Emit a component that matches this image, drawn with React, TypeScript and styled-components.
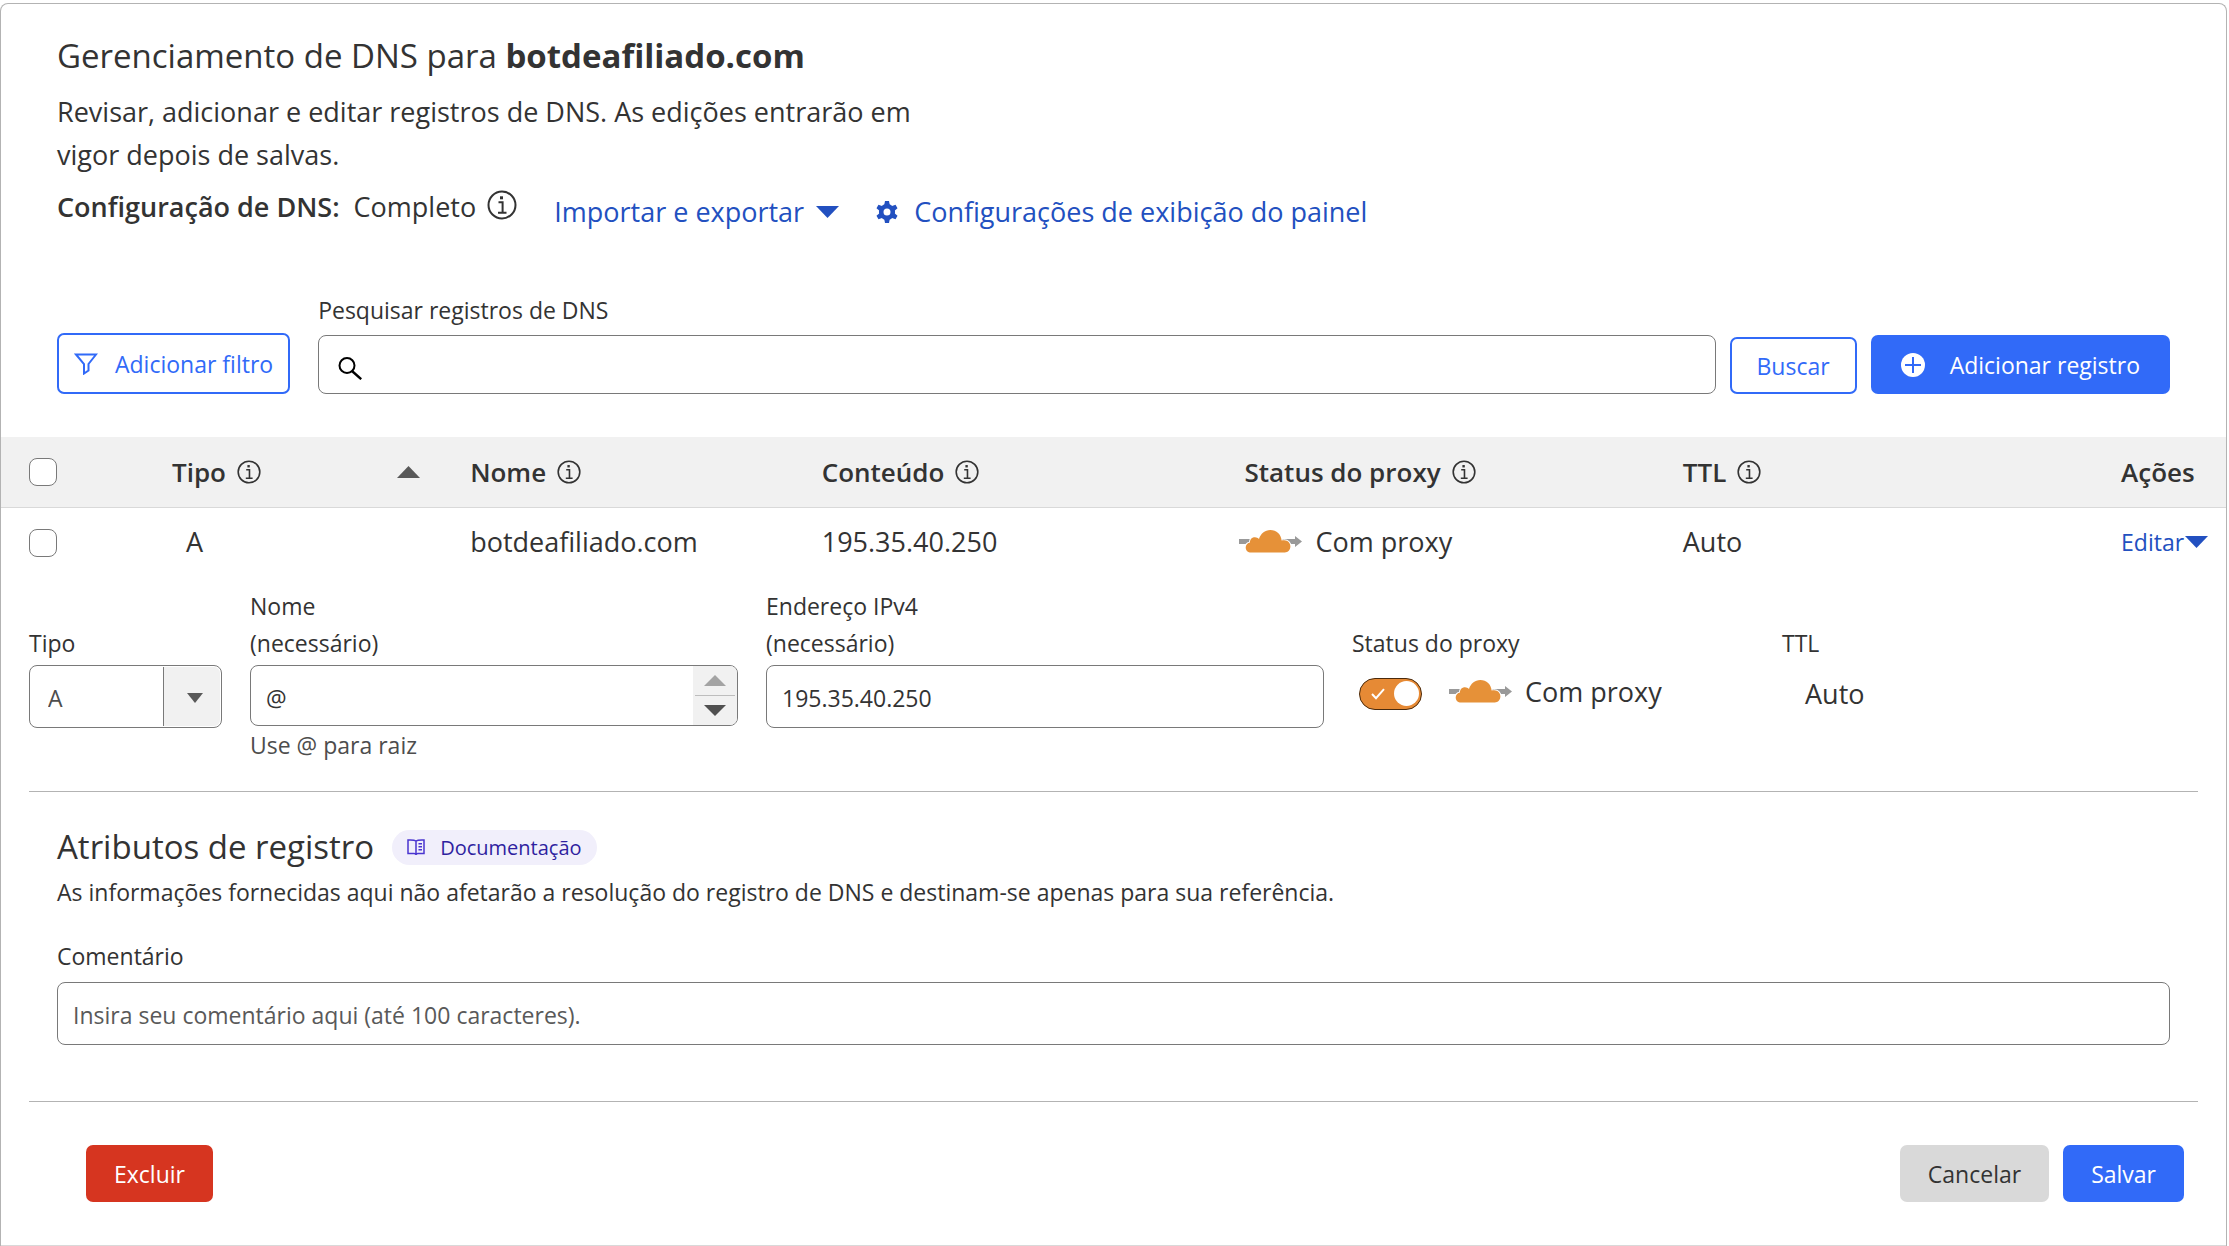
import React from "react";
import styled, { createGlobalStyle, css } from "styled-components";

const color = {
  text: "#333333",
  muted: "#4d4d4d",
  link: "#2250c0",
  blue: "#316af8",
  red: "#d63520",
  line: "#b3b3b3",
  softLine: "#d9d9d9",
  field: "#797979",
  surface: "#f1f1f1",
  orange: "#e68a35",
};

const Global = createGlobalStyle`
  *, *::before, *::after { box-sizing: border-box; }
  body {
    margin: 0;
    background: #fff;
    color: ${color.text};
    font-family: "Open Sans", "Noto Sans", sans-serif;
    font-size: 27px;
    line-height: 43px;
  }
  button, input, select, textarea { font: inherit; color: inherit; margin: 0; }
  svg { display: block; flex: none; }
`;

const Card = styled.main`
  min-height: calc(100vh - 3px);
  margin: 3px 2px 0 0;
  border: 1px solid ${color.line};
  border-bottom: 0;
  border-radius: 8px 8px 0 0;
`;

const Header = styled.header`
  padding: 30px 56px 0;
`;

const Title = styled.h1`
  margin: 0;
  font-size: 33px;
  line-height: 44px;
  font-weight: 400;
`;

const Intro = styled.p`
  max-width: 900px;
  margin: 12px 0 9px;
`;

const SetupRow = styled.div`
  display: flex;
  align-items: flex-start;
  gap: 37px;
`;

const Setup = styled.div`
  display: flex;
  gap: 14px;
`;

const SetupValue = styled.span`
  display: flex;
  gap: 11px;

  svg { margin-top: 5px; }
`;

const Strong = styled.span`
  font-weight: 600;
`;

const Links = styled.div`
  display: flex;
  gap: 37px;
  padding-top: 5px;
`;

const LinkButton = styled.button<{ $gap: number }>`
  display: inline-flex;
  align-items: center;
  gap: ${(p) => p.$gap}px;
  padding: 0;
  border: 0;
  background: none;
  color: ${color.link};
  cursor: pointer;
`;

const Toolbar = styled.div`
  display: flex;
  align-items: flex-end;
  gap: 28px;
  padding: 60px 56px 43px;
`;

const SearchForm = styled.form`
  display: flex;
  flex: 1;
  align-items: flex-end;
  gap: 14px;
`;

const SearchField = styled.div`
  flex: 1;
`;

const Label = styled.label`
  display: block;
  font-size: 23px;
  line-height: 34px;
`;

const SearchBox = styled.div`
  display: flex;
  align-items: center;
  gap: 12px;
  height: 59px;
  margin-top: 8px;
  padding: 8px 19px 0;
  border: 1px solid ${color.field};
  border-radius: 8px;

  input {
    flex: 1;
    height: 40px;
    border: 0;
    outline: 0;
    background: none;
    font-size: 23px;
  }
`;

type Tone = "outline" | "primary" | "danger" | "neutral";

const tones: Record<Tone, ReturnType<typeof css>> = {
  outline: css`border: 2px solid ${color.blue}; background: #fff; color: ${color.blue};`,
  primary: css`border: 0; background: ${color.blue}; color: #fff;`,
  danger: css`border: 0; background: ${color.red}; color: #fff;`,
  neutral: css`border: 0; background: #d9d9d9; color: ${color.text};`,
};

const Button = styled.button<{ $tone: Tone; $height?: number; $pad?: number; $gap?: number }>`
  display: inline-flex;
  align-items: center;
  justify-content: center;
  gap: ${(p) => p.$gap ?? 0}px;
  height: ${(p) => p.$height ?? 57}px;
  padding: 0 ${(p) => p.$pad ?? 28}px;
  border-radius: 7px;
  font-size: 23px;
  line-height: 34px;
  white-space: nowrap;
  cursor: pointer;
  ${(p) => tones[p.$tone]}
`;

const Table = styled.table`
  width: 100%;
  table-layout: fixed;
  border-collapse: separate;
  border-spacing: 0;
`;

const Col = styled.col<{ $width?: string }>`
  width: ${(p) => p.$width ?? "auto"};
`;

const HeadCell = styled.th`
  height: 71px;
  padding: 0 14px;
  border-bottom: 1px solid ${color.softLine};
  background: ${color.surface};
  font-size: 26px;
  font-weight: 600;
  text-align: left;
  white-space: nowrap;
`;

const CheckCell = styled.td`
  padding: 0 14px;
`;

const Cell = styled.td<{ $left?: number }>`
  height: 69px;
  padding: 0 0 3px ${(p) => p.$left ?? 14}px;
  white-space: nowrap;
`;

const HeadContent = styled.span`
  display: flex;
  align-items: center;
  gap: 11px;
`;

const SortMark = styled.span`
  margin-left: auto;
  padding-right: 22px;
`;

const Checkbox = styled.input`
  display: block;
  width: 28px;
  height: 28px;
  margin: 0 0 0 14px;
  appearance: none;
  border: 1px solid ${color.field};
  border-radius: 8px;
  background: #fff;

  &:checked { background: ${color.blue}; }
`;

const Proxy = styled.span`
  display: flex;
  align-items: center;
  gap: 13px;
`;

const EditButton = styled(LinkButton)`
  font-size: 23px;
`;

const DetailCell = styled.td`
  padding: 11px 28px 43px;
  border-bottom: 1px solid ${color.softLine};
`;

const Fields = styled.div`
  display: grid;
  grid-template-columns: 193px 488fr 558fr 402fr 416fr;
  gap: 28px;
`;

const FieldHead = styled.label`
  display: flex;
  flex-direction: column;
  justify-content: flex-end;
  height: 74px;
  margin-bottom: 3px;
  font-size: 23px;
  line-height: 37px;
`;

const fieldBox = css`
  width: 100%;
  height: 63px;
  border: 1px solid ${color.field};
  border-radius: 8px;
  background: #fff;
  font-size: 23px;
`;

const TextInput = styled.input`
  ${fieldBox}
  display: block;
  padding: 3px 15px 0;

  &::placeholder { color: #595959; opacity: 1; }
`;

const SelectBox = styled.div`
  position: relative;

  select {
    ${fieldBox}
    display: block;
    padding: 3px 70px 0 18px;
    appearance: none;
    color: ${color.muted};
  }
`;

const SelectArrow = styled.span`
  position: absolute;
  inset: 2px 2px 2px auto;
  display: flex;
  align-items: center;
  justify-content: center;
  width: 57px;
  padding: 2px 0 0 5px;
  border-left: 1px solid ${color.field};
  border-radius: 0 6px 6px 0;
  background: ${color.surface};
  pointer-events: none;
`;

const NameBox = styled.div`
  ${fieldBox}
  display: flex;
  height: 61px;
  overflow: hidden;

  input {
    flex: 1;
    min-width: 0;
    padding: 5px 15px 0;
    border: 0;
    background: none;
  }
`;

const Stepper = styled.div`
  display: flex;
  flex-direction: column;
  width: 44px;
  padding: 0 2px;
  background: ${color.surface};

  button {
    display: flex;
    flex: 1;
    align-items: center;
    justify-content: center;
    padding: 0;
    border: 0;
    background: none;
  }
  button + button { border-top: 1px solid #bdbdbd; }
`;

const Help = styled.div`
  margin-top: 2px;
  color: ${color.muted};
  font-size: 23px;
  line-height: 34px;
`;

const Value = styled.div<{ $indent: number }>`
  display: flex;
  align-items: center;
  gap: 27px;
  height: 57px;
  padding-left: ${(p) => p.$indent}px;

  ${Proxy} { padding-bottom: 5px; }
`;

const Toggle = styled.span`
  position: relative;
  display: flex;
  align-items: center;
  width: 63px;
  height: 32px;
  padding-left: 11px;
  border: 1px solid #4a2a0c;
  border-radius: 16px;
  background: ${color.orange};

  input {
    position: absolute;
    inset: 0;
    width: 100%;
    height: 100%;
    opacity: 0;
  }
  &::after {
    content: "";
    width: 25px;
    height: 25px;
    margin: 0 2px 0 auto;
    border-radius: 50%;
    background: #fff;
  }
`;

const Rule = styled.hr`
  height: 1px;
  margin: 0;
  border: 0;
  background: ${color.line};
`;

const Attributes = styled.section`
  margin-top: 29px;

  > div { padding: 33px 28px 56px; }
`;

const AttributesHead = styled.div`
  display: flex;
  align-items: center;
  gap: 18px;
`;

const Subtitle = styled.h2`
  margin: 0;
  font-size: 33px;
  line-height: 44px;
  font-weight: 400;
`;

const DocLink = styled.a`
  display: inline-flex;
  align-items: center;
  gap: 15px;
  height: 35px;
  padding: 0 15px;
  border-radius: 18px;
  background: #f1effb;
  color: #2f1fa0;
  font-size: 20px;
  text-decoration: none;
`;

const Description = styled.p`
  margin: 6px 0 30px;
  font-size: 23px;
  line-height: 34px;
`;

const CommentInput = styled(TextInput)`
  margin-top: 9px;
`;

const Actions = styled.div`
  display: flex;
  gap: 14px;
  padding: 43px 14px 0 57px;

  button:first-child { margin-right: auto; }
`;

function InfoIcon({ size = 24 }: { size?: number }) {
  return (
    <svg width={size} height={size} viewBox="0 0 30 30" fill="none" stroke="#333" strokeWidth="2" aria-hidden="true">
      <circle cx="15" cy="15" r="13.5" />
      <path d="M11.5 12.2H15.6V22.3M11 22.8H19.5" />
      <rect x="13" y="6.3" width="3" height="3" fill="#333" stroke="none" />
    </svg>
  );
}

function GearIcon() {
  return (
    <svg width="22" height="22" viewBox="0 0 22 22" aria-hidden="true">
      <circle cx="11" cy="11" r="5.8" fill="none" stroke="currentColor" strokeWidth="4.6" />
      {[0, 60, 120, 180, 240, 300].map((angle) => (
        <path key={angle} d="M8 5L9 0H13L14 5Z" fill="currentColor" transform={`rotate(${angle} 11 11)`} />
      ))}
    </svg>
  );
}

function Triangle({ width = 23, height = 12, fill, up }: { width?: number; height?: number; fill: string; up?: boolean }) {
  return (
    <svg width={width} height={height} viewBox="0 0 23 12" preserveAspectRatio="none" fill={fill} aria-hidden="true">
      <path d={up ? "M0 12L11.5 0L23 12Z" : "M0 0H23L11.5 12Z"} />
    </svg>
  );
}

function ProxiedCloud() {
  return (
    <svg width="63" height="23" viewBox="0 0 63 23" aria-hidden="true">
      <path d="M0 9H56V6L63 11.5L56 17V14H0Z" fill="#999" />
      <path
        d="M12 22.5C9 22.5 6.7 20.5 6.7 17.5C6.7 15 8.5 13 11 12.6C10.8 9.5 13 7.3 16 7.3C17.5 7.3 19 8 20 9C21.5 3.8 26 0 31.3 0C37.5 0 42.3 4.6 42.6 10.6C43.3 10.3 44.3 10.2 45.2 10.2C48.8 10.2 51.4 13 51.4 16.3C51.4 20 49 22.5 45.8 22.5Z"
        fill="#e69138"
        stroke="#fff"
        strokeWidth="2"
        paintOrder="stroke"
      />
    </svg>
  );
}

const columns = ["Tipo", "Nome", "Conteúdo", "Status do proxy", "TTL"];

function RecordForm() {
  return (
    <>
      <Fields>
        <div>
          <FieldHead htmlFor="type">Tipo</FieldHead>
          <SelectBox>
            <select id="type" defaultValue="A">
              <option>A</option>
            </select>
            <SelectArrow>
              <Triangle width={16} height={10} fill="#595959" />
            </SelectArrow>
          </SelectBox>
        </div>
        <div>
          <FieldHead htmlFor="name">
            <span>Nome</span>
            <span>(necessário)</span>
          </FieldHead>
          <NameBox>
            <input id="name" type="text" defaultValue="@" />
            <Stepper>
              <button type="button" aria-label="Anterior"><Triangle width={22} height={11} fill="#a3a3a3" up /></button>
              <button type="button" aria-label="Próximo"><Triangle width={22} height={11} fill="#505050" /></button>
            </Stepper>
          </NameBox>
          <Help>Use @ para raiz</Help>
        </div>
        <div>
          <FieldHead htmlFor="ip">
            <span>Endereço IPv4</span>
            <span>(necessário)</span>
          </FieldHead>
          <TextInput id="ip" type="text" defaultValue="195.35.40.250" />
        </div>
        <div>
          <FieldHead htmlFor="proxy">Status do proxy</FieldHead>
          <Value $indent={7}>
            <Toggle>
              <input id="proxy" type="checkbox" defaultChecked />
              <svg width="14" height="12" viewBox="0 0 14 12" fill="none" stroke="#fff" strokeWidth="2" aria-hidden="true">
                <path d="M1 6L5 10.2L13 1.2" />
              </svg>
            </Toggle>
            <Proxy>
              <ProxiedCloud />
              Com proxy
            </Proxy>
          </Value>
        </div>
        <div>
          <FieldHead as="div">TTL</FieldHead>
          <Value $indent={23}>Auto</Value>
        </div>
      </Fields>
      <Attributes>
        <Rule />
        <div>
          <AttributesHead>
            <Subtitle>Atributos de registro</Subtitle>
            <DocLink href="#documentacao">
              <svg width="18" height="17" viewBox="0 0 18 17" fill="none" stroke="#4a35d0" strokeWidth="1.5" aria-hidden="true">
                <path d="M9 2C7.5 0.9 5 0.8 1 1V14.5H7C8 14.5 9 15 9 16C9 15 10 14.5 11 14.5H17V1C13 0.8 10.5 0.9 9 2V16M11.5 4.8H15M11.5 7.8H15M11.5 10.8H15" />
              </svg>
              Documentação
            </DocLink>
          </AttributesHead>
          <Description>
            As informações fornecidas aqui não afetarão a resolução do registro de DNS e destinam-se apenas para sua referência.
          </Description>
          <Label htmlFor="comment">Comentário</Label>
          <CommentInput id="comment" type="text" placeholder="Insira seu comentário aqui (até 100 caracteres)." />
        </div>
        <Rule />
      </Attributes>
      <Actions>
        <Button type="button" $tone="danger">Excluir</Button>
        <Button type="button" $tone="neutral">Cancelar</Button>
        <Button type="button" $tone="primary">Salvar</Button>
      </Actions>
    </>
  );
}

export default function App() {
  return (
    <>
      <Global />
      <Card>
        <Header>
          <Title>
            Gerenciamento de DNS para <b>botdeafiliado.com</b>
          </Title>
          <Intro>Revisar, adicionar e editar registros de DNS. As edições entrarão em vigor depois de salvas.</Intro>
          <SetupRow>
            <Setup>
              <Strong>Configuração de DNS:</Strong>
              <SetupValue>
                Completo
                <InfoIcon size={30} />
              </SetupValue>
            </Setup>
            <Links>
              <LinkButton type="button" $gap={12}>
                Importar e exportar
                <Triangle fill={color.link} />
              </LinkButton>
              <LinkButton type="button" $gap={16}>
                <GearIcon />
                Configurações de exibição do painel
              </LinkButton>
            </Links>
          </SetupRow>
        </Header>

        <Toolbar>
          <Button type="button" $tone="outline" $height={61} $pad={15} $gap={17}>
            <svg width="24" height="22" viewBox="0 0 24 22" fill="none" stroke="currentColor" strokeWidth="2" aria-hidden="true">
              <path d="M2 1.5H22L14.5 11V17.5L10 20.5V11Z" />
            </svg>
            Adicionar filtro
          </Button>
          <SearchForm onSubmit={(e) => e.preventDefault()}>
            <SearchField>
              <Label htmlFor="search">Pesquisar registros de DNS</Label>
              <SearchBox>
                <svg width="24" height="23" viewBox="0 0 24 23" fill="none" stroke="#000" strokeWidth="2" aria-hidden="true">
                  <circle cx="9" cy="8.5" r="7.5" />
                  <path d="M14 14L23.2 22.2" strokeWidth="2.4" />
                </svg>
                <input id="search" type="text" />
              </SearchBox>
            </SearchField>
            <Button type="submit" $tone="outline" $pad={25}>Buscar</Button>
            <Button type="button" $tone="primary" $height={59} $pad={30} $gap={25}>
              <svg width="24" height="24" viewBox="0 0 24 24" aria-hidden="true">
                <circle cx="12" cy="12" r="12" fill="#fff" />
                <path d="M12 4V20M4 12H20" stroke={color.blue} strokeWidth="2" />
              </svg>
              Adicionar registro
            </Button>
          </SearchForm>
        </Toolbar>

        <Table>
          <colgroup>
            <Col $width="157px" />
            <Col $width="13.4%" />
            <Col $width="15.8%" />
            <Col $width="19%" />
            <Col $width="19.7%" />
            <Col $width="19.7%" />
            <Col />
          </colgroup>
          <thead>
            <tr>
              <HeadCell>
                <Checkbox type="checkbox" aria-label="Selecionar todos" />
              </HeadCell>
              {columns.map((name, i) => (
                <HeadCell key={name} scope="col">
                  <HeadContent>
                    {name}
                    <InfoIcon />
                    {i === 0 && (
                      <SortMark>
                        <Triangle fill="#595959" up />
                      </SortMark>
                    )}
                  </HeadContent>
                </HeadCell>
              ))}
              <HeadCell scope="col">Ações</HeadCell>
            </tr>
          </thead>
          <tbody>
            <tr>
              <CheckCell>
                <Checkbox type="checkbox" aria-label="Selecionar botdeafiliado.com" />
              </CheckCell>
              <Cell $left={28}>A</Cell>
              <Cell>botdeafiliado.com</Cell>
              <Cell>195.35.40.250</Cell>
              <Cell $left={9}>
                <Proxy>
                  <ProxiedCloud />
                  Com proxy
                </Proxy>
              </Cell>
              <Cell>Auto</Cell>
              <Cell>
                <EditButton type="button" $gap={1}>
                  Editar
                  <Triangle fill={color.link} />
                </EditButton>
              </Cell>
            </tr>
            <tr>
              <DetailCell colSpan={7}>
                <RecordForm />
              </DetailCell>
            </tr>
          </tbody>
        </Table>
      </Card>
    </>
  );
}
